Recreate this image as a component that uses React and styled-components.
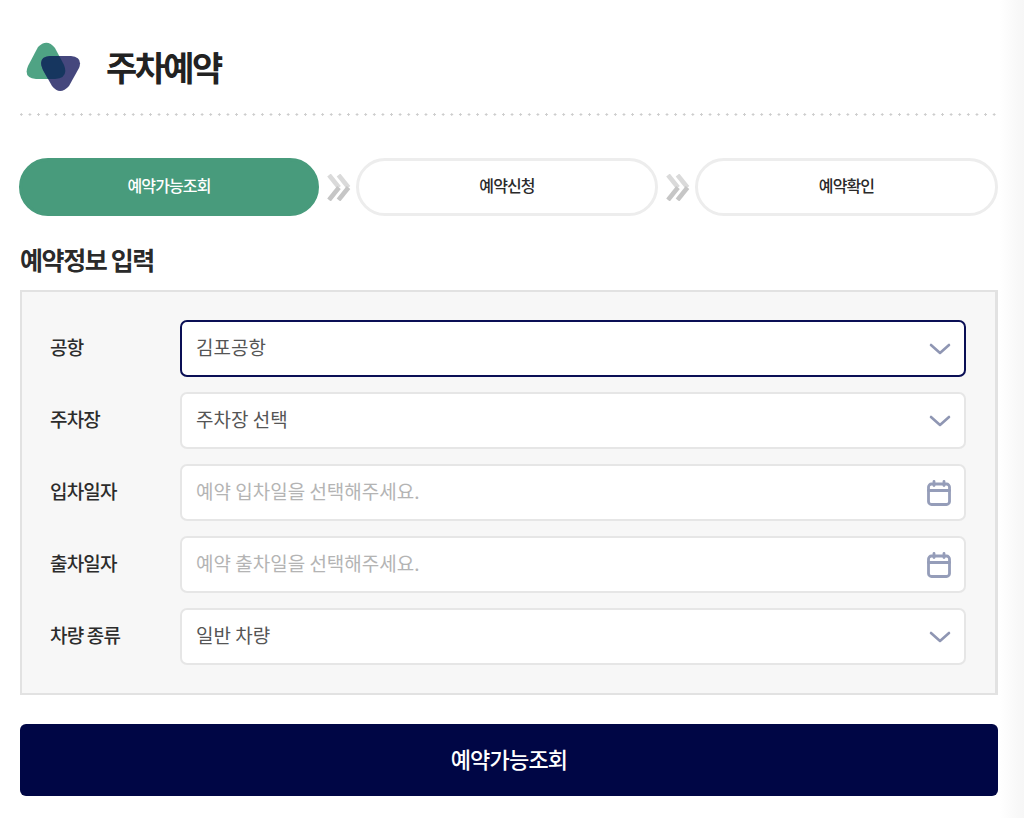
import React from "react";
import styled, { createGlobalStyle } from "styled-components";

const GlobalStyle = createGlobalStyle`
  html, body {
    margin: 0;
    padding: 0;
    background: #fff;
    font-family: "Noto Sans CJK KR", "Noto Sans", sans-serif;
  }
`;

const Page = styled.div`
  position: relative;
  width: 1024px;
  height: 818px;
  overflow: hidden;
  box-sizing: border-box;
  padding: 0 26px 0 20px;
  &::after {
    content: "";
    position: absolute;
    top: 0;
    right: 0;
    bottom: 0;
    width: 24px;
    background: linear-gradient(to right, rgba(240, 240, 240, 0), rgba(240, 240, 240, 0.6));
  }
`;

const Header = styled.header`
  display: flex;
  align-items: center;
  height: 116px;
  padding: 18px 0 0 6px;
  box-sizing: border-box;
  background: radial-gradient(circle, #cdcdcd 1px, transparent 1.3px) -3px bottom / 8.62px 3px repeat-x;
`;

const Title = styled.h1`
  margin: 0 0 0 25px;
  font-size: 34px;
  line-height: 50px;
  font-weight: 700;
  letter-spacing: -2.6px;
  color: #222;
`;

const Steps = styled.div`
  display: grid;
  grid-template-columns: 300px 37px 302px 37px 303px;
  align-items: center;
  margin: 42px 0 0 -1px;
`;

const Step = styled.div`
  height: 58px;
  box-sizing: border-box;
  display: flex;
  align-items: center;
  justify-content: center;
  padding-bottom: 5px;
  border-radius: 29px;
  font-size: 16px;
  font-weight: 500;
  letter-spacing: -0.9px;
  border: 3px solid ${({ active }) => (active ? "#489b7c" : "#ededed")};
  background: ${({ active }) => (active ? "#489b7c" : "#fff")};
  color: ${({ active }) => (active ? "#fff" : "#2a2a2a")};
`;

const ChevronBox = styled.div`
  display: flex;
  padding-left: 8px;
`;

const Heading = styled.h2`
  margin: 23px 0 0;
  font-size: 25px;
  line-height: 40px;
  font-weight: 700;
  letter-spacing: -1.4px;
  color: #2a2a2a;
`;

const Panel = styled.div`
  margin-top: 11px;
  box-sizing: border-box;
  height: 405px;
  padding: 28px 29px 0 28px;
  background: #f7f7f7;
  border: 2px solid #e2e2e2;
  border-right-width: 3px;
  display: flex;
  flex-direction: column;
  gap: 15px;
`;

const Row = styled.div`
  display: flex;
  align-items: center;
`;

const Label = styled.label`
  flex: 0 0 130px;
  padding-bottom: 5px;
  font-size: 19px;
  font-weight: 500;
  letter-spacing: -0.8px;
  color: #2c2c2c;
`;

const Field = styled.div`
  flex: 1;
  height: 57px;
  box-sizing: border-box;
  display: flex;
  align-items: center;
  justify-content: space-between;
  padding: 0 13px 0 14px;
  background: #fff;
  border-radius: 7px;
  border: 2px solid ${({ focused }) => (focused ? "#0a0f55" : "#e6e6e6")};
  font-size: 19px;
  color: ${({ muted }) => (muted ? "#b4b4b4" : "#555")};
`;

const FieldText = styled.span`
  padding-bottom: 5px;
`;

const Submit = styled.button`
  display: block;
  width: 100%;
  height: 72px;
  margin-top: 29px;
  padding: 0 0 5px;
  border: 0;
  border-radius: 6px;
  background: #000645;
  color: #fff;
  font-family: inherit;
  font-size: 22px;
  font-weight: 500;
  letter-spacing: -0.8px;
`;

const greenShape = "M12 5 Q21 -4 29 6 L38 23 Q43 36 29 37 L10 37 Q-3 36 2 24 Z";
const purpleShape = "M24 14 L45 14 Q57 15 53 26 L43 44 Q34 54 26 44 L17 28 Q11 15 24 14 Z";

const Logo = () => (
  <svg width="55" height="51" viewBox="0 0 55 51">
    <defs>
      <clipPath id="logo-overlap">
        <path d={greenShape} />
      </clipPath>
    </defs>
    <path d={greenShape} fill="#4fa384" />
    <path d={purpleShape} fill="#45477d" />
    <path d={purpleShape} fill="#16365f" clipPath="url(#logo-overlap)" />
  </svg>
);

const DoubleChevron = () => (
  <svg width="26" height="27" viewBox="0 0 26 27" fill="none" strokeWidth="4.6">
    <path d="M2 1 L12 13.5" stroke="#dadada" />
    <path d="M12 13.5 L2 26" stroke="#c6c6c6" />
    <path d="M11.5 1 L21.5 13.5" stroke="#dadada" />
    <path d="M21.5 13.5 L11.5 26" stroke="#c6c6c6" />
  </svg>
);

const ArrowDown = () => (
  <svg width="22" height="14" viewBox="0 0 22 14" fill="none" stroke="#8f96b3" strokeWidth="2.6" strokeLinecap="round" strokeLinejoin="round">
    <path d="M2 3 L11 11 L20 3" />
  </svg>
);

const CalendarIcon = () => (
  <svg width="24" height="26" viewBox="0 0 24 26" fill="none" stroke="#959db9" strokeWidth="2.8" strokeLinecap="round">
    <rect x="1.5" y="4" width="21" height="20.5" rx="3" />
    <path d="M1.5 10.5 H22.5" />
    <path d="M7 1.5 V5.5" />
    <path d="M17 1.5 V5.5" />
  </svg>
);

const fields = [
  { label: "공항", value: "김포공항", icon: "arrow", focused: true },
  { label: "주차장", value: "주차장 선택", icon: "arrow" },
  { label: "입차일자", value: "예약 입차일을 선택해주세요.", icon: "calendar", muted: true },
  { label: "출차일자", value: "예약 출차일을 선택해주세요.", icon: "calendar", muted: true },
  { label: "차량 종류", value: "일반 차량", icon: "arrow" },
];

export default function App() {
  return (
    <Page>
      <GlobalStyle />
      <Header>
        <Logo />
        <Title>주차예약</Title>
      </Header>
      <Steps>
        <Step active>예약가능조회</Step>
        <ChevronBox>
          <DoubleChevron />
        </ChevronBox>
        <Step>예약신청</Step>
        <ChevronBox>
          <DoubleChevron />
        </ChevronBox>
        <Step>예약확인</Step>
      </Steps>
      <Heading>예약정보 입력</Heading>
      <Panel>
        {fields.map((field) => (
          <Row key={field.label}>
            <Label>{field.label}</Label>
            <Field focused={field.focused} muted={field.muted}>
              <FieldText>{field.value}</FieldText>
              {field.icon === "arrow" ? <ArrowDown /> : <CalendarIcon />}
            </Field>
          </Row>
        ))}
      </Panel>
      <Submit>예약가능조회</Submit>
    </Page>
  );
}
